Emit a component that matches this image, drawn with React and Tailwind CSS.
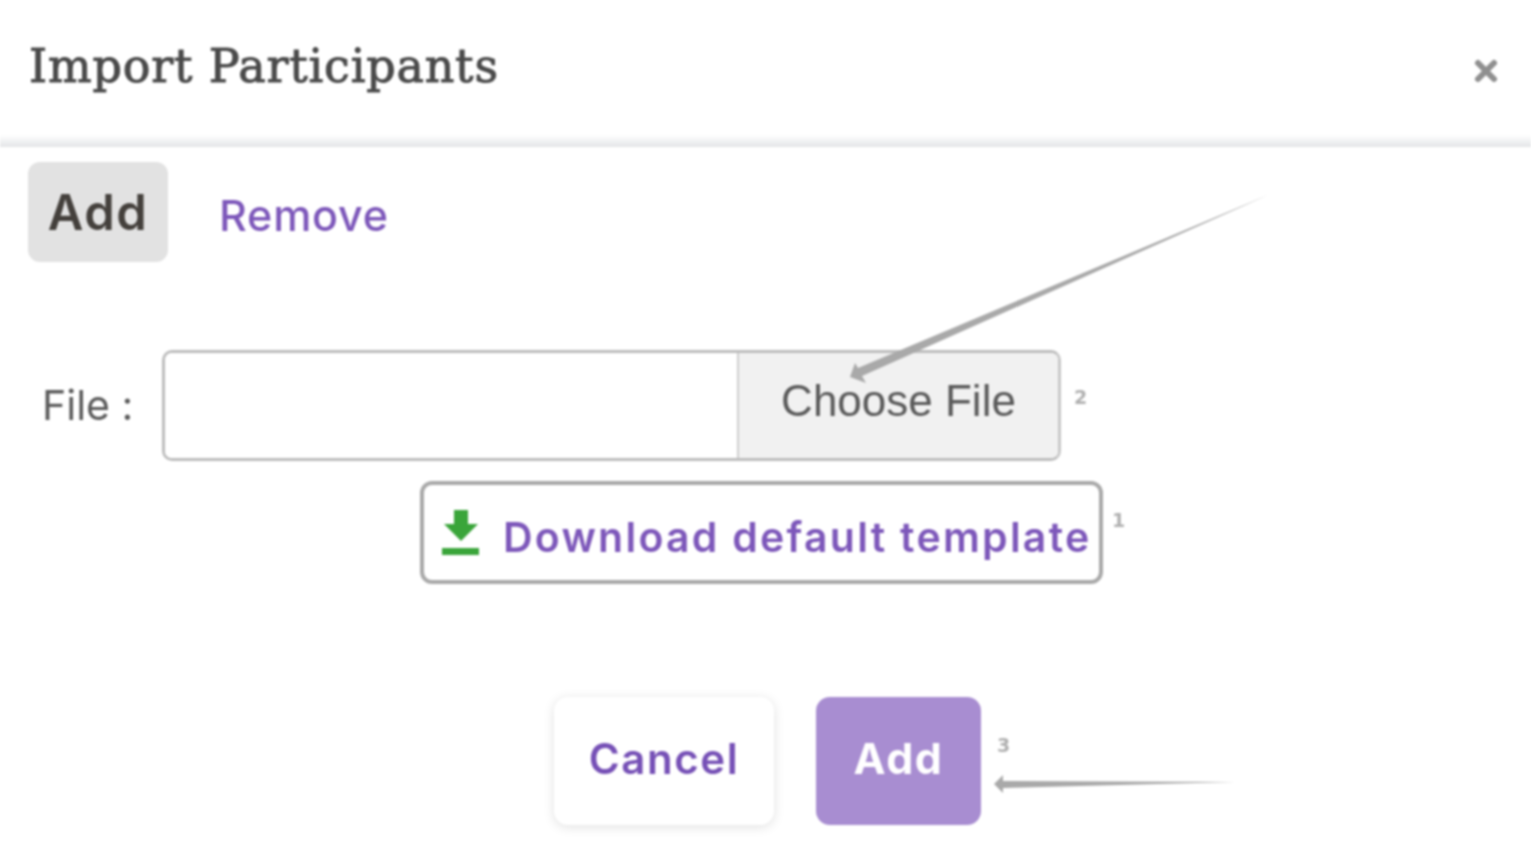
import React from "react";

function Annotations() {
  return (
    <svg className="pointer-events-none absolute left-0 top-0" width="1531" height="868" viewBox="0 0 1531 868" fill="#a9a9a9">
      <path d="M850 377 L855 363 L858 368 L1268 195 L862 376 L866 383 Z" />
      <path d="M994 784 L1003 775 L1003 781 L1235 782 L1003 788 L1003 793 Z" />
    </svg>
  );
}

function Marker({ className, children }) {
  return (
    <span className={`absolute text-[19px] font-bold leading-none text-[#b0b0b0] font-['DejaVu_Sans',sans-serif] ${className}`}>
      {children}
    </span>
  );
}

export default function App() {
  return (
    <div className="relative h-[868px] w-full overflow-hidden bg-white font-['Inter',sans-serif] blur-[0.8px]">
      <header className="flex h-[135px] items-start justify-between pl-[29px] pr-[32px] pt-[34px]">
        <h2 className="font-['DejaVu_Serif',serif] text-[46px] leading-[64px] tracking-[0.8px] text-[#4a4a4a] [-webkit-text-stroke:1px_#4a4a4a]">
          Import Participants
        </h2>
        <button className="mt-[24px] text-[#8f8f8f]">
          <svg width="26" height="26" viewBox="0 0 26 26" stroke="currentColor" strokeWidth="6" strokeLinecap="round">
            <path d="M5 5 L21 21 M21 5 L5 21" />
          </svg>
        </button>
      </header>
      <div className="h-[12px] bg-gradient-to-b from-white to-[#e3e5e7]" />

      <div className="flex items-center gap-[51px] pl-[28px] pt-[15px]">
        <button className="h-[100px] w-[140px] rounded-[12px] bg-[#e2e2e2] pt-[2px] text-[49px] font-semibold tracking-[1.5px] text-[#44403c]">
          Add
        </button>
        <a className="pt-[7px] text-[43px] font-medium tracking-[0.8px] text-[#7d57ba]">Remove</a>
      </div>

      <div className="flex items-center pl-[42px] pt-[88px]">
        <label className="w-[120px] text-[41px] text-[#5b5b5b]">File :</label>
        <div className="flex h-[111px] w-[899px] overflow-hidden rounded-[10px] border-[3px] border-[#bdbdbd] border-r-[#c8c8c8]">
          <div className="flex-1 bg-white" />
          <div className="flex w-[321px] items-center justify-center border-l-2 border-[#cfcfcf] bg-[#f1f1f1] pb-[9px] font-['Liberation_Sans',sans-serif] text-[44px] text-[#5a5a5a]">
            Choose File
          </div>
        </div>
      </div>

      <div className="pl-[420px] pt-[20px]">
        <a className="flex h-[103px] w-[683px] items-center rounded-[12px] border-[4px] border-[#a9a9a9] pl-[17px]">
          <svg className="shrink-0" width="40" height="48" viewBox="0 0 40 48" fill="#3aa53a">
            <path d="M13 1 H27 V15 H37 L20 32 L3 15 H13 Z" />
            <rect x="1" y="39" width="37" height="7" />
          </svg>
          <span className="pl-[22px] pt-[10px] text-[41px] font-semibold tracking-[2.25px] whitespace-nowrap text-[#7d57ba]">
            Download default template
          </span>
        </a>
      </div>

      <div className="flex gap-[42px] pl-[554px] pt-[113px]">
        <button className="h-[128px] w-[220px] rounded-[14px] bg-white pb-[6px] text-[42px] font-semibold tracking-[1.6px] text-[#7650b6] shadow-[0_2px_12px_rgba(0,0,0,0.12)]">
          Cancel
        </button>
        <button className="h-[128px] w-[165px] rounded-[14px] bg-[#a88dd1] pb-[6px] text-[43px] font-bold tracking-[1.5px] text-white">
          Add
        </button>
      </div>

      <Annotations />
      <Marker className="left-[1074px] top-[388px]">2</Marker>
      <Marker className="left-[1112px] top-[511px]">1</Marker>
      <Marker className="left-[997px] top-[736px]">3</Marker>
    </div>
  );
}
